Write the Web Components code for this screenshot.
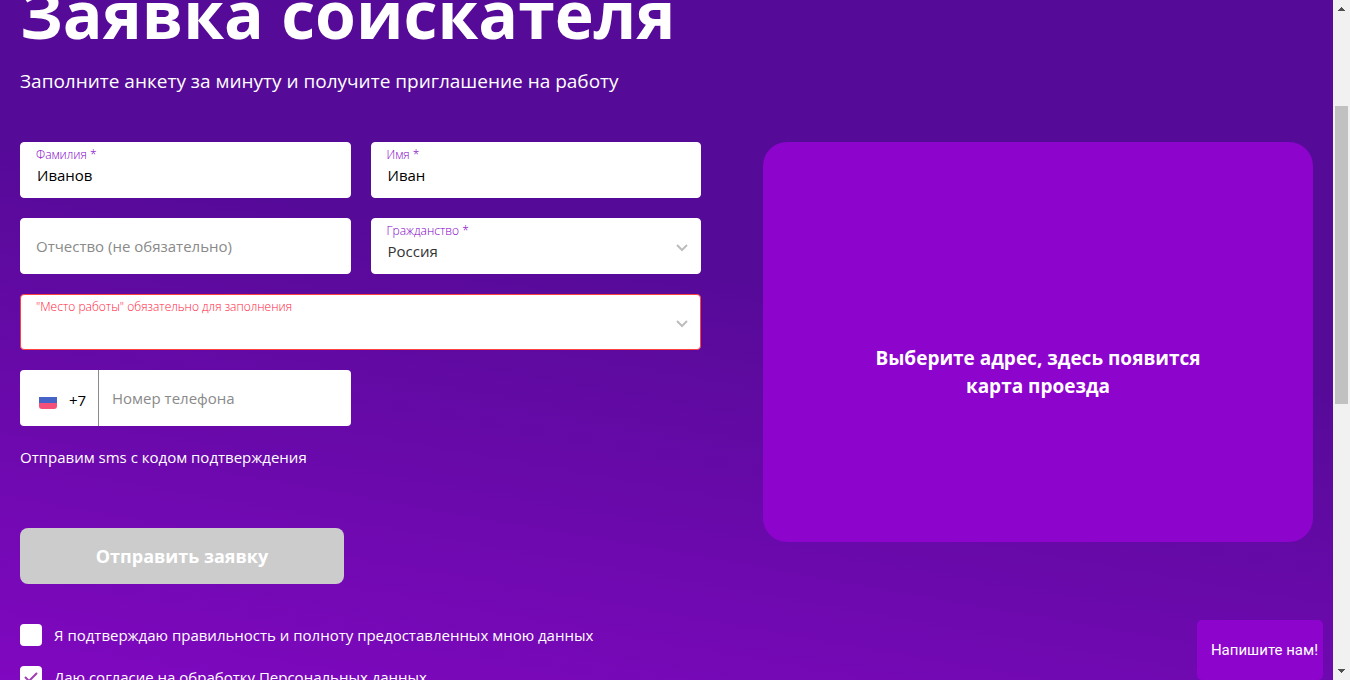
<!DOCTYPE html>
<html lang="ru">
<head>
<meta charset="utf-8">
<meta name="viewport" content="width=device-width, initial-scale=1">
<title>Заявка соискателя</title>
<style>
  html, body { height: 100%; }
  body { margin: 0; overflow: hidden; font-family: "Open Sans", "Noto Sans", sans-serif; font-size: 15px; color: #fff; }
</style>
</head>
<body>
<app-shell>
  <application-form></application-form>
  <route-map>Выберите адрес, здесь появится карта проезда</route-map>
  <chat-launcher slot="chat">Напишите нам!</chat-launcher>
</app-shell>

<script>
const define = (name, html, setup) => {
  const template = document.createElement('template');
  template.innerHTML = html;
  customElements.define(name, class extends HTMLElement {
    constructor() {
      super();
      this.attachShadow({ mode: 'open' }).append(template.content.cloneNode(true));
    }
    connectedCallback() {
      if (setup && !this.ready) { this.ready = true; setup(this, this.shadowRoot); }
    }
  });
};

const fieldStyles = `
  * { box-sizing: border-box; }
  :host { display: block; }
  .box { display: grid; height: 56px; padding: 4px 15px; border: 1px solid #fff; border-radius: 4px; background: #fff; grid-template-rows: 16px 1fr; align-items: start; }
  label { color: #8400c8; font-size: 12px; line-height: 16px; font-weight: 300; white-space: nowrap; }
  input, select { width: 100%; height: 24px; min-width: 0; margin: 0; padding: 0 1px; border: 0; outline: 0; background: none; color: #000; font: inherit; line-height: 24px; }
  :host(:focus-within) .box { border-color: #8d04cc; }
`;

define('app-shell', `
  <style>
    :host { display: grid; grid-template-columns: 1fr auto; height: 100vh; }
    main { position: relative; overflow: hidden; background: linear-gradient(10deg, #8008c0 0%, #560a98 58%); }
    .intro { padding: 0 20px; }
    h1 { margin: -34px 0 0; font-size: 66px; line-height: 94px; font-weight: 700; white-space: nowrap; }
    p { margin: 7px 0 47px; font-size: 19px; line-height: 28px; }
    .columns { display: grid; grid-template-columns: minmax(0, 681fr) minmax(0, 550fr); gap: 62px; padding: 0 20px; align-items: start; }
    ::slotted([slot="chat"]) { position: absolute; right: 10px; bottom: 0; }
  </style>
  <main>
    <header class="intro">
      <h1>Заявка соискателя</h1>
      <p>Заполните анкету за минуту и получите приглашение на работу</p>
    </header>
    <div class="columns"><slot></slot></div>
    <slot name="chat"></slot>
  </main>
  <scroll-rail></scroll-rail>
`);

define('scroll-rail', `
  <style>
    :host { display: grid; grid-template-rows: 17px 89fr 298fr 259fr 17px; width: 17px; background: #f1f1f1; }
    svg { width: 17px; height: 17px; fill: #505050; }
    .thumb { grid-row: 3; margin: 0 2px; background: #c1c1c1; }
    .down { grid-row: 5; }
  </style>
  <svg viewBox="0 0 17 17" aria-hidden="true"><path d="M5 11h7v-1h-1V9h-1V8H9V7H8v1H7v1H6v1H5z"/></svg>
  <div class="thumb"></div>
  <svg class="down" viewBox="0 0 17 17" aria-hidden="true"><path d="M5 6h7v1h-1v1h-1v1H9v1H8V9H7V8H6V7H5z"/></svg>
`);

define('text-field', `
  <style>${fieldStyles}
    :host([empty]) .box { grid-template-rows: 1fr; align-items: center; }
    :host([empty]) label, :host([empty]) input { grid-area: 1 / 1; }
    :host([empty]) label { color: #8a8a8a; font-size: 15px; line-height: 24px; font-weight: 400; }
  </style>
  <div class="box"><label for="control"></label><input id="control" type="text"></div>
`, (host, root) => {
  const input = root.querySelector('input');
  root.querySelector('label').textContent = host.getAttribute('label');
  input.value = host.getAttribute('value') || '';
  const sync = () => host.toggleAttribute('empty', !input.value);
  input.addEventListener('input', sync);
  sync();
});

define('select-field', `
  <style>${fieldStyles}
    select { appearance: none; grid-area: 2 / 1; color: #333; }
    label { grid-area: 1 / 1; }
    svg { grid-area: 1 / 1 / 3 / 1; place-self: center end; width: 16px; height: 16px; margin: 4px -5px 0 0; fill: none; stroke: #bdbdbd; stroke-width: 2; pointer-events: none; }
    :host([invalid]) .box { border-color: #ff4040; }
    :host([invalid]) label { color: #ff2040; }
  </style>
  <div class="box">
    <label for="control"></label>
    <select id="control"></select>
    <svg viewBox="0 0 16 16" aria-hidden="true"><path d="M3 5l5 5 5-5"/></svg>
  </div>
`, (host, root) => {
  root.querySelector('label').textContent = host.getAttribute('label');
  root.querySelector('select').add(new Option(host.getAttribute('value') || ''));
});

define('phone-field', `
  <style>${fieldStyles}
    .box { grid-template: 1fr / 79px 1fr; align-items: stretch; padding: 0; border-width: 0; overflow: hidden; }
    .code { display: flex; align-items: center; gap: 12px; padding: 4px 0 0 19px; border-right: 1px solid #8a8a8a; color: #000; }
    .code svg { width: 18px; height: 18px; }
    .number { display: grid; align-items: center; padding: 0 13px; }
    label, input { grid-area: 1 / 1; }
    label { color: #8a8a8a; font-size: 15px; line-height: 24px; font-weight: 400; }
    :host([filled]) label { visibility: hidden; }
  </style>
  <div class="box">
    <div class="code">
      <svg viewBox="0 0 18 18" aria-hidden="true"><path fill="#4664c8" d="M0 6h18v6H0z"/><path fill="#f5507a" d="M0 12h18v3a3 3 0 0 1-3 3H3a3 3 0 0 1-3-3z"/></svg>
      <span>+7</span>
    </div>
    <div class="number"><label for="control">Номер телефона</label><input id="control" type="tel"></div>
  </div>
`, (host, root) => {
  const input = root.querySelector('input');
  input.addEventListener('input', () => host.toggleAttribute('filled', !!input.value));
});

define('check-option', `
  <style>
    :host { display: block; }
    label { display: grid; grid-template-columns: 22px 1fr; column-gap: 12px; align-items: center; font-size: 15px; line-height: 22px; }
    input { appearance: none; grid-area: 1 / 1; width: 22px; height: 22px; margin: 0; border-radius: 4px; background: #fff; }
    svg { grid-area: 1 / 1; width: 22px; height: 22px; fill: none; stroke: #a03cb4; stroke-width: 2; visibility: hidden; pointer-events: none; }
    input:checked + svg { visibility: visible; }
  </style>
  <label><input type="checkbox"><svg viewBox="0 0 22 22" aria-hidden="true"><path d="M5 11l4 4 8-8"/></svg><span><slot></slot></span></label>
`, (host, root) => { root.querySelector('input').checked = host.hasAttribute('checked'); });

define('application-form', `
  <style>
    :host { display: block; min-width: 0; }
    .fields { display: grid; grid-template-columns: 1fr 1fr; gap: 20px; }
    .wide { grid-column: 1 / -1; }
    .note { margin: 20px 0 60px; font-size: 15px; line-height: 22px; }
    button { display: block; width: 324px; max-width: 100%; height: 56px; margin: 0 0 40px; padding: 0; border: 0; border-radius: 8px; background: #ccc; color: #fff; font: inherit; font-size: 18px; font-weight: 700; }
    .consents { display: grid; gap: 20px; }
  </style>
  <form>
    <div class="fields">
      <text-field label="Фамилия *" value="Иванов"></text-field>
      <text-field label="Имя *" value="Иван"></text-field>
      <text-field label="Отчество (не обязательно)"></text-field>
      <select-field label="Гражданство *" value="Россия"></select-field>
      <select-field class="wide" invalid label="&quot;Место работы&quot; обязательно для заполнения"></select-field>
      <phone-field></phone-field>
    </div>
    <p class="note">Отправим sms с кодом подтверждения</p>
    <button type="submit" disabled>Отправить заявку</button>
    <div class="consents">
      <check-option>Я подтверждаю правильность и полноту предоставленных мною данных</check-option>
      <check-option checked>Даю согласие на обработку Персональных данных</check-option>
    </div>
  </form>
`);

define('route-map', `
  <style>
    :host { display: grid; place-items: center; min-height: 400px; padding: 0 100px; box-sizing: border-box; border-radius: 24px; background: #8d04cc; text-align: center; font-size: 19px; line-height: 28px; font-weight: 700; }
    p { margin: 0; padding-top: 60px; }
  </style>
  <p><slot></slot></p>
`);

define('chat-launcher', `
  <style>
    :host { display: block; }
    button { display: block; height: 60px; padding: 0 5px 0 14px; border: 0; border-radius: 5px; background: #8d04cc; color: #fff; font-family: Roboto, "Liberation Sans", sans-serif; font-size: 15px; white-space: nowrap; }
  </style>
  <button type="button"><slot></slot></button>
`);
</script>
</body>
</html>
